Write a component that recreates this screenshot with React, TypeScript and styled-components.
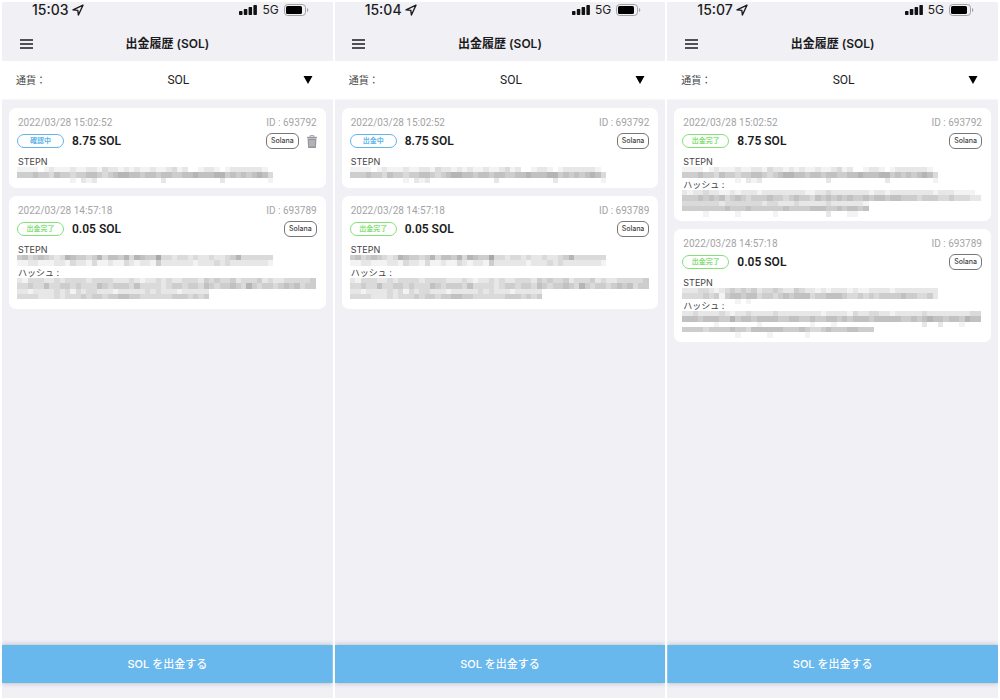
import React from 'react';
import styled, { createGlobalStyle } from 'styled-components';

const GlobalStyle = createGlobalStyle`
  * { box-sizing: border-box; }
  body {
    margin: 0;
    background: #fff;
    color: #1c1c1e;
    font-family: Inter, "Noto Sans CJK JP", sans-serif;
  }
  button, select { font: inherit; color: inherit; margin: 0; }
`;

const Board = styled.main`
  display: grid;
  grid-template-columns: repeat(3, minmax(0, 1fr));
  gap: 2px;
  min-height: 100vh;
  padding: 2px;
`;

const Screen = styled.section`
  display: flex;
  flex-direction: column;
  background: #f0f0f5;
`;

const StatusBar = styled.div`
  display: flex;
  justify-content: space-between;
  align-items: center;
  height: 16px;
  padding: 0 24px 0 30px;
`;

const StatusGroup = styled.div<{ $gap: number }>`
  display: flex;
  align-items: center;
  gap: ${(p) => p.$gap}px;
`;

const Clock = styled.time`
  font-size: 14px;
  line-height: 16px;
  font-weight: 500;
`;

const Network = styled.span`
  font-size: 12px;
  line-height: 16px;
`;

const TitleBar = styled.header`
  display: grid;
  grid-template-columns: 18px 1fr 18px;
  align-items: center;
  height: 43px;
  padding: 8px 15px 0;
`;

const MenuButton = styled.button`
  display: flex;
  justify-content: center;
  padding: 4px 0;
  border: 0;
  background: none;
`;

const Title = styled.h1`
  margin: 0;
  text-align: center;
  font-size: 12px;
  line-height: 16px;
  font-weight: 600;
`;

const CurrencyRow = styled.div`
  display: flex;
  align-items: center;
  height: 39px;
  padding: 0 20px 0 14px;
  background: #fff;
  border-bottom: 1px solid #f7f7f9;
`;

const CurrencyLabel = styled.label`
  font-size: 10px;
  line-height: 16px;
  color: #444;
`;

const SelectBox = styled.div`
  position: relative;
  flex: 1;
  display: flex;
`;

const CurrencySelect = styled.select`
  flex: 1;
  appearance: none;
  border: 0;
  padding: 0 2px 0 0;
  background: none;
  text-align: center;
  text-align-last: center;
  font-family: Roboto, sans-serif;
  font-size: 12px;
  line-height: 16px;
`;

const Caret = styled.svg`
  position: absolute;
  right: 0;
  top: 4px;
  pointer-events: none;
`;

const History = styled.div`
  display: flex;
  flex-direction: column;
  gap: 8px;
  padding: 8px 7px;
`;

const Card = styled.article`
  padding: 9px;
  border-radius: 7px;
  background: #fff;
`;

const MetaRow = styled.div`
  display: flex;
  justify-content: space-between;
  font-family: Roboto, sans-serif;
  font-size: 10px;
  line-height: 12px;
  color: #a3a3a5;
`;

const AmountRow = styled.div`
  display: flex;
  align-items: center;
  height: 16px;
  margin: 4px 0 7px -1px;
`;

const Status = styled.span<{ $color: string }>`
  width: 47px;
  border: 1px solid ${(p) => p.$color};
  border-radius: 7px;
  text-align: center;
  font-size: 7px;
  line-height: 12px;
  font-weight: 700;
  color: ${(p) => p.$color};
`;

const Amount = styled.strong`
  flex: 1;
  margin-left: 8px;
  font-family: Roboto, sans-serif;
  font-size: 12px;
  line-height: 16px;
  font-weight: 600;
`;

const Chain = styled.span`
  padding: 0 4px;
  border: 1px solid #77777a;
  border-radius: 6px;
  font-size: 7px;
  line-height: 14px;
  font-weight: 500;
  color: #444;
`;

const TrashButton = styled.button`
  display: flex;
  margin-left: 8px;
  padding: 0;
  border: 0;
  background: none;
`;

const Caption = styled.p`
  margin: 0;
  font-size: 9px;
  line-height: 12px;
  color: #444;
`;

const Masked = styled.svg<{ $height: number }>`
  display: block;
  width: 100%;
  height: ${(p) => p.$height}px;
  overflow: visible;
`;

const Footer = styled.footer`
  margin-top: auto;
  padding-bottom: 15px;
`;

const WithdrawButton = styled.button`
  display: block;
  width: 100%;
  height: 38px;
  padding: 0;
  border: 0;
  background: #68b7ed;
  box-shadow: 0 0 5px rgba(60, 60, 80, 0.35);
  color: #fff;
  font-size: 11px;
  line-height: 16px;
  font-weight: 500;
  clip-path: inset(-8px 0);
`;

/* Each digit is the darkness of one mosaic cell, 0 being empty. */
const ADDRESS_A = [
  '111101211121122132212121121123120012210122222210',
  '444544354434455434566554554554455655566454545653',
  '000000000010212000000000000200000000002000000001',
];
const ADDRESS_B = [
  '453454323654434635546365447332332322322346333333',
  '112211122132213112113212214222222122232322222221',
];
const ADDRESS_C = [
  '222332123434342334322432212122212112222122222222',
  '333343414554553443454555344555433434344445443342',
  '000000000010100000000000000000000000000000000000',
];
const HASH_A = [
  '21333223233332333322232122323223332434334233342322333334',
  '33433533443433354344435333323443443543445436434434545344',
  '221222232313233222122222323222122222',
  '333322232333434434455443333334443434',
];
const HASH_B = [
  '2122322112122212222222211223222222212212222222212221111',
  '44454545345434445443454435454545445455455444344433433322',
  '33333332333333323322232222232222221',
  '444444445444544444454444555445455450',
  '000010000010000001000000000200011000',
];
const HASH_C = [
  '22322223212232222322222222122221322332212222232222222233',
  '55545554464554555544554454455454555455555445456554554655',
  '00000010000000100000000010001000000000000000020020001000',
  '444434444544355555544454334544455444',
  '000000000010000010000001000000000000',
];

const BLUE = '#62b5ea';
const GREEN = '#84e077';
const SHADES = ['none', '#f3f3f3', '#e7e7e7', '#dadada', '#cdcdcd', '#c1c1c1', '#b5b5b5', '#a8a8a8'];

type Entry = {
  date: string;
  id: string;
  status: string;
  color: string;
  amount: string;
  address: string[];
  hash?: string[];
  removable?: boolean;
};

const first = { date: '2022/03/28 15:02:52', id: '693792', amount: '8.75 SOL', address: ADDRESS_A };
const second: Entry = {
  date: '2022/03/28 14:57:18', id: '693789', amount: '0.05 SOL',
  status: '出金完了', color: GREEN, address: ADDRESS_B, hash: HASH_A,
};

const SCREENS: { time: string; entries: Entry[] }[] = [
  { time: '15:03', entries: [{ ...first, status: '確認中', color: BLUE, removable: true }, second] },
  { time: '15:04', entries: [{ ...first, status: '出金中', color: BLUE }, second] },
  {
    time: '15:07',
    entries: [
      { ...first, status: '出金完了', color: GREEN, hash: HASH_B },
      { ...second, address: ADDRESS_C, hash: HASH_C },
    ],
  },
];

function Mosaic({ rows, height }: { rows: string[]; height: number }) {
  const cell = 16 / 3;
  return (
    <Masked $height={height} aria-hidden="true" shapeRendering="crispEdges">
      {rows.map((row, y) =>
        [...row].map((level, x) => (
          <rect key={`${y}-${x}`} x={x * cell - 1} y={y * cell - 1} width={cell} height={cell} fill={SHADES[Number(level)]} />
        )),
      )}
    </Masked>
  );
}

function Trash() {
  return (
    <svg width="10" height="13" viewBox="0 0 10 13" fill="none" stroke="#96969d">
      <path d="M3.2 1.8V.7h3.6v1.1" />
      <path d="M0 2.5h10" strokeWidth="1.4" />
      <path d="M.6 3.6h8.8l-.5 9.300H1.100z" fill="#96969d" stroke="none" />
      <path d="M3 5v6.400M5 5v6.400M7 5v6.400" stroke="#dcdce0" strokeWidth=".8" />
    </svg>
  );
}

function HistoryCard({ entry }: { entry: Entry }) {
  return (
    <Card>
      <MetaRow>
        <time>{entry.date}</time>
        <span>ID : {entry.id}</span>
      </MetaRow>
      <AmountRow>
        <Status $color={entry.color}>{entry.status}</Status>
        <Amount>{entry.amount}</Amount>
        <Chain>Solana</Chain>
        {entry.removable && (
          <TrashButton type="button" aria-label="削除"><Trash /></TrashButton>
        )}
      </AmountRow>
      <Caption>STEPN</Caption>
      <Mosaic rows={entry.address} height={11} />
      {entry.hash && (
        <>
          <Caption>ハッシュ :</Caption>
          <Mosaic rows={entry.hash} height={21} />
        </>
      )}
    </Card>
  );
}

function PhoneScreen({ time, entries }: { time: string; entries: Entry[] }) {
  const selectId = `currency-${time.replace(':', '')}`;
  return (
    <Screen>
      <StatusBar>
        <StatusGroup $gap={3}>
          <Clock>{time}</Clock>
          <svg width="12" height="12" viewBox="0 0 12 12" fill="none" stroke="#1c1c1e" strokeWidth="1.4" strokeLinejoin="round">
            <path d="M11 1.200 1 5.900l4.800.5.6 4.600z" />
          </svg>
        </StatusGroup>
        <StatusGroup $gap={5}>
          <svg width="18" height="10" viewBox="0 0 18 10" fill="#111">
            <rect x="0" y="6" width="3.500" height="4" rx=".7" />
            <rect x="4.800" y="4" width="3.500" height="6" rx=".7" />
            <rect x="9.600" y="2" width="3.500" height="8" rx=".7" />
            <rect x="14.400" y="0" width="3.500" height="10" rx=".7" />
          </svg>
          <Network>5G</Network>
          <svg width="25" height="12" viewBox="0 0 25 12">
            <rect x=".5" y=".5" width="21" height="11" rx="3.2" fill="none" stroke="#a2a2a6" />
            <rect x="2" y="2" width="16" height="8" rx="1.6" fill="#000" />
            <path d="M23 4v4q1.300-.6 1.300-2T23 4" fill="#a2a2a6" />
          </svg>
        </StatusGroup>
      </StatusBar>
      <TitleBar>
        <MenuButton type="button" aria-label="メニュー">
          <svg width="13" height="10" viewBox="0 0 13 10" stroke="#1c1c1e" strokeWidth="1.4">
            <path d="M0 1h13M0 5h13M0 9h13" />
          </svg>
        </MenuButton>
        <Title>出金履歴 (SOL)</Title>
      </TitleBar>
      <CurrencyRow>
        <CurrencyLabel htmlFor={selectId}>通貨：</CurrencyLabel>
        <SelectBox>
          <CurrencySelect id={selectId} defaultValue="SOL">
            <option>SOL</option>
          </CurrencySelect>
          <Caret width="10" height="8" viewBox="0 0 10 8"><path d="M.5 0h9L5 8z" /></Caret>
        </SelectBox>
      </CurrencyRow>
      <History>
        {entries.map((entry) => <HistoryCard key={entry.id} entry={entry} />)}
      </History>
      <Footer>
        <WithdrawButton type="button">SOL を出金する</WithdrawButton>
      </Footer>
    </Screen>
  );
}

export default function App() {
  return (
    <>
      <GlobalStyle />
      <Board>
        {SCREENS.map((screen) => <PhoneScreen key={screen.time} {...screen} />)}
      </Board>
    </>
  );
}
